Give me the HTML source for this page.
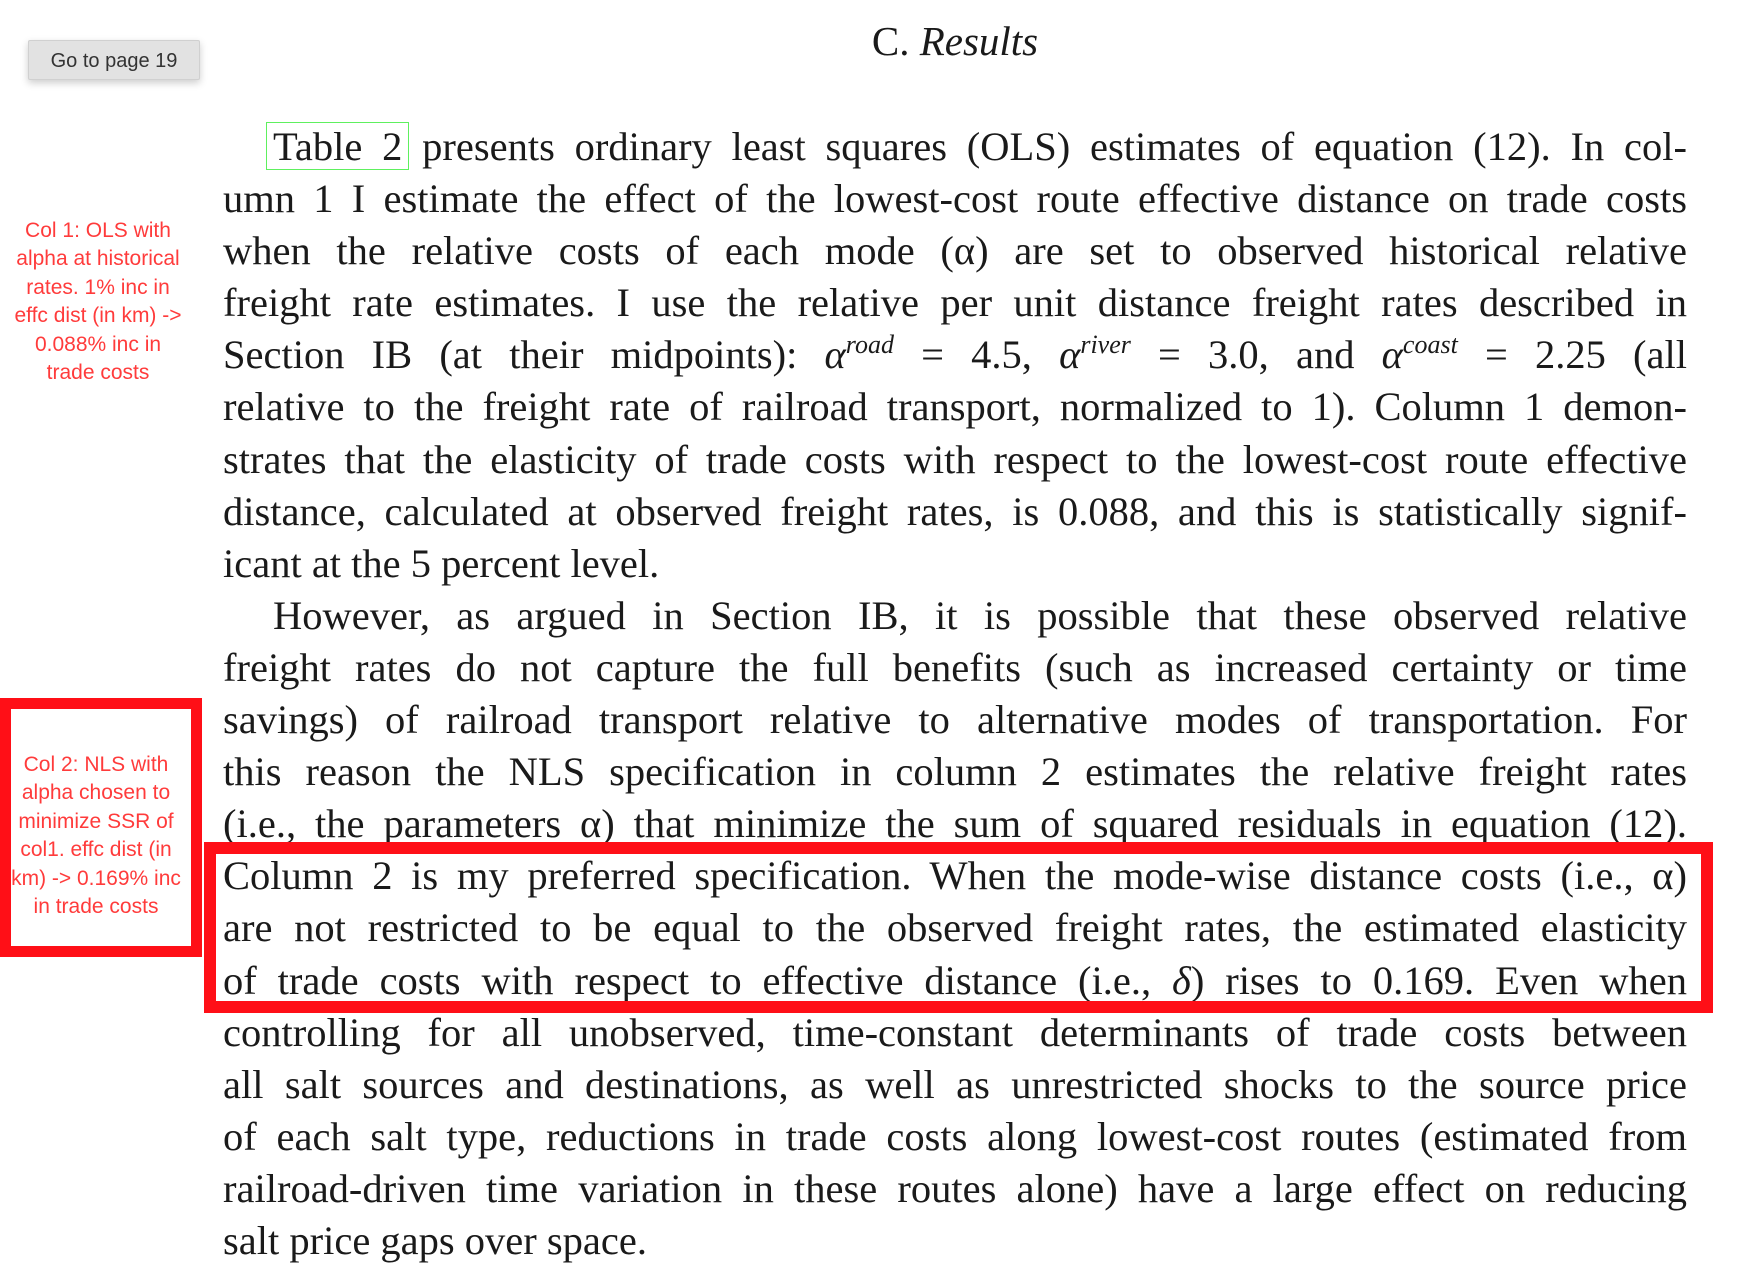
<!DOCTYPE html>
<html><head><meta charset="utf-8"><style>
body{margin:0;width:1762px;height:1266px;background:#fff;position:relative;overflow:hidden;font-family:"Liberation Serif",serif;color:#1a1a1a}
.btn{position:absolute;left:28px;top:40px;width:172px;height:40px;background:#e2e2e2;border:1px solid #d0d0d0;box-shadow:0 3px 8px rgba(0,0,0,.2);font:20px "Liberation Sans",sans-serif;color:#333;text-align:center;line-height:40px;box-sizing:border-box;border-radius:2px}
.title{position:absolute;left:0;width:1910px;top:17px;text-align:center;font-size:41px}
.body{position:absolute;left:223px;top:121px;width:1464px;font-size:40.5px;line-height:52.1px}
.l{text-align:justify;text-align-last:justify;white-space:nowrap;height:52.1px}
.l.n{text-align-last:left}
.ind{padding-left:50px}
sup{font-size:26px;font-style:italic;vertical-align:15px;line-height:0}
.ann{position:absolute;color:#ff3b3b;font:21px/28.4px "Liberation Sans",sans-serif;text-align:center;width:196px;left:0}
.rb1{position:absolute;left:0;top:698px;width:202px;height:259px;border:11px solid #ff0f17;box-sizing:border-box}
.rb2{position:absolute;left:204px;top:842px;width:1509px;height:171px;border:12px solid #ff0f17;box-sizing:border-box}
.gb{position:absolute;left:266px;top:122px;width:143px;height:48px;border:1.5px solid #5ef05e;box-sizing:border-box}
</style></head><body>
<div class="btn">Go to page 19</div>
<div class="title">C. <i>Results</i></div>
<div class="ann" style="top:217px">Col 1: OLS with<br>alpha at historical<br>rates. 1% inc in<br>effc dist (in km) -&gt;<br>0.088% inc in<br>trade costs</div>
<div class="rb1"></div>
<div class="ann" style="top:751px;left:-2px">Col 2: NLS with<br>alpha chosen to<br>minimize SSR of<br>col1. effc dist (in<br>km) -&gt; 0.169% inc<br>in trade costs</div>
<div class="gb"></div>
<div class="body">
<div class="l ind">Table 2 presents ordinary least squares (OLS) estimates of equation (12). In col-</div>
<div class="l">umn 1 I estimate the effect of the lowest-cost route effective distance on trade costs</div>
<div class="l">when the relative costs of each mode (α) are set to observed historical relative</div>
<div class="l">freight rate estimates. I use the relative per unit distance freight rates described in</div>
<div class="l">Section IB (at their midpoints): <i>α</i><sup>road</sup> = 4.5, <i>α</i><sup>river</sup> = 3.0, and <i>α</i><sup>coast</sup> = 2.25 (all</div>
<div class="l">relative to the freight rate of railroad transport, normalized to 1). Column 1 demon-</div>
<div class="l">strates that the elasticity of trade costs with respect to the lowest-cost route effective</div>
<div class="l">distance, calculated at observed freight rates, is 0.088, and this is statistically signif-</div>
<div class="l n">icant at the 5 percent level.</div>
<div class="l ind">However, as argued in Section IB, it is possible that these observed relative</div>
<div class="l">freight rates do not capture the full benefits (such as increased certainty or time</div>
<div class="l">savings) of railroad transport relative to alternative modes of transportation. For</div>
<div class="l">this reason the NLS specification in column 2 estimates the relative freight rates</div>
<div class="l">(i.e., the parameters α) that minimize the sum of squared residuals in equation (12).</div>
<div class="l">Column 2 is my preferred specification. When the mode-wise distance costs (i.e., α)</div>
<div class="l">are not restricted to be equal to the observed freight rates, the estimated elasticity</div>
<div class="l">of trade costs with respect to effective distance (i.e., <i>δ</i>) rises to 0.169. Even when</div>
<div class="l">controlling for all unobserved, time-constant determinants of trade costs between</div>
<div class="l">all salt sources and destinations, as well as unrestricted shocks to the source price</div>
<div class="l">of each salt type, reductions in trade costs along lowest-cost routes (estimated from</div>
<div class="l">railroad-driven time variation in these routes alone) have a large effect on reducing</div>
<div class="l n">salt price gaps over space.</div>
</div>
<div class="rb2"></div>
</body></html>
